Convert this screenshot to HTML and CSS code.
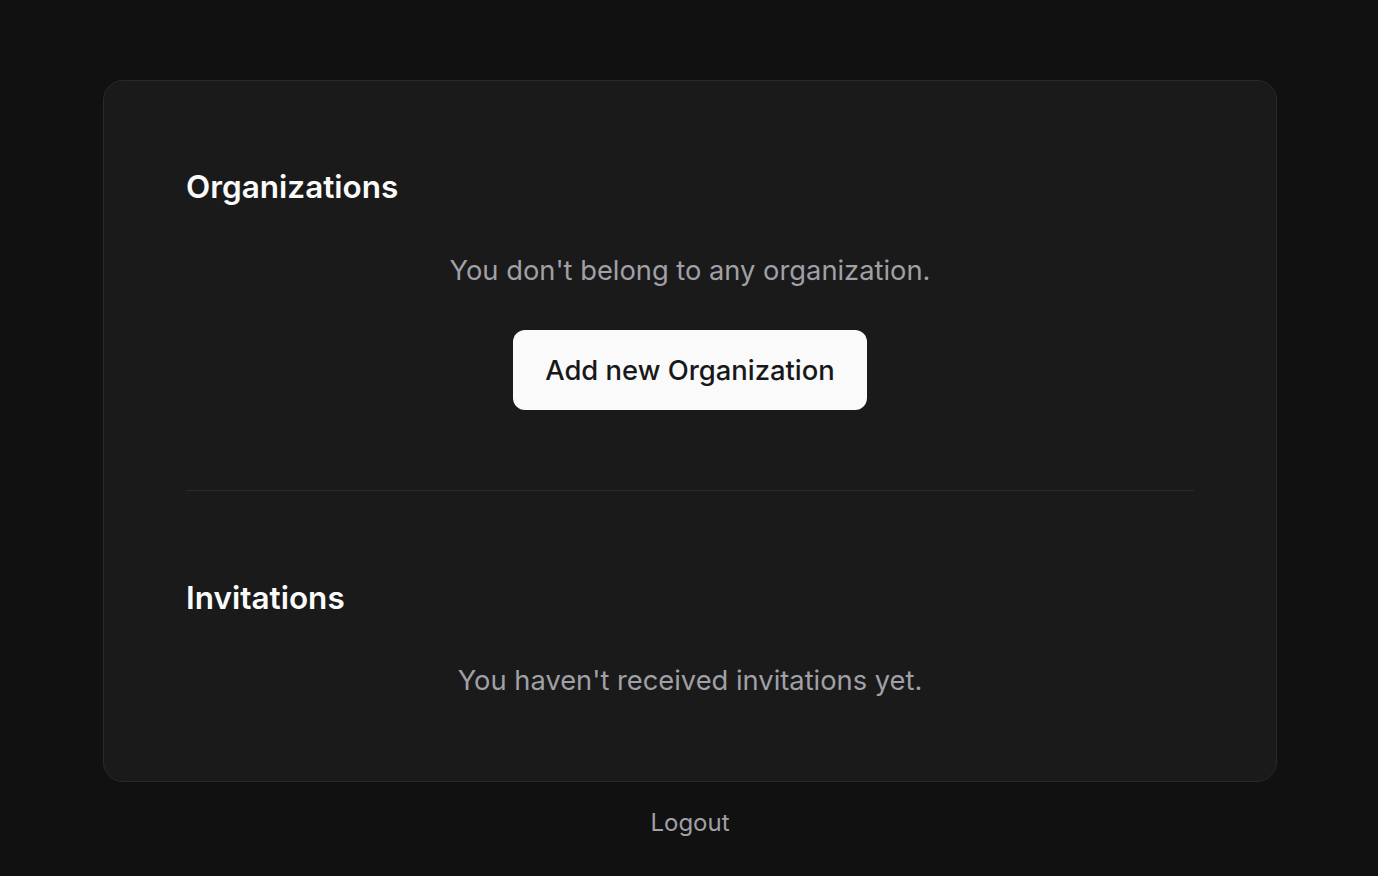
FILE: index.html
```html
<!DOCTYPE html>
<html lang="en">
<head>
<meta charset="utf-8">
<title>Organizations</title>
<link rel="stylesheet" href="styles.css">
</head>
<body>
<main class="page">
  <div class="card">
    <section class="section">
      <h2 class="section-title">Organizations</h2>
      <p class="empty">You don't belong to any organization.</p>
      <div class="actions">
        <button class="btn-primary" type="button">Add new Organization</button>
      </div>
    </section>
    <hr class="divider">
    <section class="section">
      <h2 class="section-title">Invitations</h2>
      <p class="empty">You haven't received invitations yet.</p>
    </section>
  </div>
  <a class="logout" href="#">Logout</a>
</main>
</body>
</html>
```

FILE: styles.css
```css
html, body {
  margin: 0;
  padding: 0;
  background: #111111;
}
body {
  font-family: Inter, "Noto Sans", "Liberation Sans", sans-serif;
  color: #fafafa;
  min-height: 876px;
}
.page {
  display: flex;
  flex-direction: column;
  align-items: center;
  padding: 80px 0 0 2px;
}
.card {
  box-sizing: border-box;
  width: 1174px;
  background: #1a1a1a;
  border: 1px solid #2a2a2a;
  border-radius: 20px;
  padding: 87px 82px 83px;
  display: flex;
  flex-direction: column;
}
.section {
  display: flex;
  flex-direction: column;
}
.section-title {
  margin: 0;
  font-size: 31.5px;
  line-height: 38px;
  font-weight: 600;
  color: #fafafa;
}
.empty {
  margin: 48px 0 0;
  text-align: center;
  font-size: 27.3px;
  line-height: 34px;
  color: #a0a0a6;
}
.section + .divider + .section .empty {
  margin-top: 47px;
}
.actions {
  display: flex;
  justify-content: center;
  margin-top: 42px;
}
.btn-primary {
  font-family: inherit;
  font-size: 27.4px;
  font-weight: 500;
  height: 80px;
  padding: 0 32px;
  border: none;
  border-radius: 12px;
  background: #fafafa;
  color: #18181b;
}
.divider {
  border: none;
  height: 1px;
  background: #2a2a2a;
  margin: 80px 0 88px;
}
.logout {
  margin-top: 26px;
  font-size: 24px;
  line-height: 30px;
  color: #a0a0a6;
  text-decoration: none;
}
```
